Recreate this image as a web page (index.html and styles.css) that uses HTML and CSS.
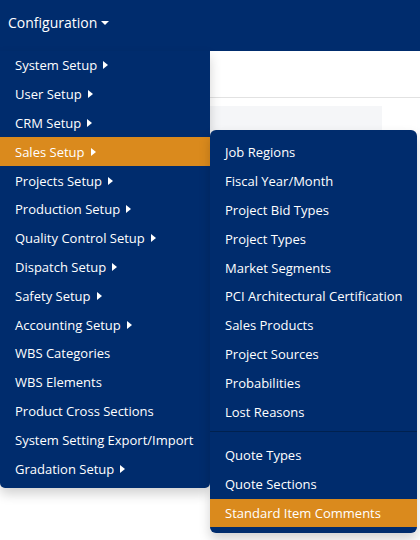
FILE: index.html
```html
<!DOCTYPE html>
<html>
<head>
<meta charset="utf-8">
<link rel="stylesheet" href="styles.css">
</head>
<body>
<div class="navbar">
  <span class="nav-link">Configuration<span class="caret-down"></span></span>
</div>
<div class="content">
  <div class="page-header"></div>
  <div class="panel-wrap"><div class="panel"></div></div>
</div>

<ul class="menu main-menu">
  <li class="item">System Setup<span class="caret-right"></span></li>
  <li class="item">User Setup<span class="caret-right"></span></li>
  <li class="item">CRM Setup<span class="caret-right"></span></li>
  <li class="item active">Sales Setup<span class="caret-right"></span></li>
  <li class="item">Projects Setup<span class="caret-right"></span></li>
  <li class="item">Production Setup<span class="caret-right"></span></li>
  <li class="item">Quality Control Setup<span class="caret-right"></span></li>
  <li class="item">Dispatch Setup<span class="caret-right"></span></li>
  <li class="item">Safety Setup<span class="caret-right"></span></li>
  <li class="item">Accounting Setup<span class="caret-right"></span></li>
  <li class="item">WBS Categories</li>
  <li class="item">WBS Elements</li>
  <li class="item">Product Cross Sections</li>
  <li class="item">System Setting Export/Import</li>
  <li class="item">Gradation Setup<span class="caret-right"></span></li>
</ul>

<ul class="menu sub-menu">
  <li class="item">Job Regions</li>
  <li class="item">Fiscal Year/Month</li>
  <li class="item">Project Bid Types</li>
  <li class="item">Project Types</li>
  <li class="item">Market Segments</li>
  <li class="item">PCI Architectural Certification</li>
  <li class="item">Sales Products</li>
  <li class="item">Project Sources</li>
  <li class="item">Probabilities</li>
  <li class="item">Lost Reasons</li>
  <li class="divider"></li>
  <li class="item">Quote Types</li>
  <li class="item">Quote Sections</li>
  <li class="item active">Standard Item Comments</li>
</ul>
</body>
</html>
```
FILE: styles.css
```css
html, body {
  margin: 0;
  padding: 0;
  background: #ffffff;
  font-family: "Open Sans", "Noto Sans", sans-serif;
  font-size: 13px;
  color: #ffffff;
  width: 420px;
  height: 540px;
  overflow: hidden;
}

.navbar {
  height: 51px;
  background: #002c6d;
  display: flex;
  align-items: center;
  padding-left: 8px;
}

.nav-link {
  font-size: 14px;
  display: inline-flex;
  align-items: center;
  margin-top: -6px;
}

.caret-down {
  display: inline-block;
  width: 0;
  height: 0;
  margin-left: 4px;
  border-left: 4px solid transparent;
  border-right: 4px solid transparent;
  border-top: 4px solid #ffffff;
}

.content {
  padding-left: 210px;
}

.page-header {
  height: 46px;
  border-bottom: 1px solid #e2e2e2;
}

.panel-wrap {
  padding-top: 8px;
  padding-right: 38px;
}

.panel {
  height: 120px;
  background: #f5f6f8;
}

.menu {
  position: absolute;
  list-style: none;
  margin: 0;
  background: #002c6d;
}

.main-menu {
  top: 51px;
  left: 0;
  width: 210px;
  padding: 0 0 5px 0;
  border-radius: 0 0 5px 5px;
  box-shadow: 0 6px 12px rgba(0, 0, 0, 0.18);
  box-sizing: border-box;
}

.sub-menu {
  top: 130px;
  left: 210px;
  width: 207px;
  padding: 8px 0 6px 0;
  border-radius: 6px;
  box-shadow: 0 6px 12px rgba(0, 0, 0, 0.18);
  box-sizing: border-box;
}

.item {
  height: 28.8px;
  display: flex;
  align-items: center;
  padding-left: 15px;
  white-space: nowrap;
}

.item.active {
  background: #da8a1d;
}

.caret-right {
  display: inline-block;
  width: 0;
  height: 0;
  margin-left: 6px;
  border-top: 4.5px solid transparent;
  border-bottom: 4.5px solid transparent;
  border-left: 5px solid #ffffff;
}

.divider {
  height: 1px;
  background: #00214f;
  margin: 5px 0 9px 0;
}
```
